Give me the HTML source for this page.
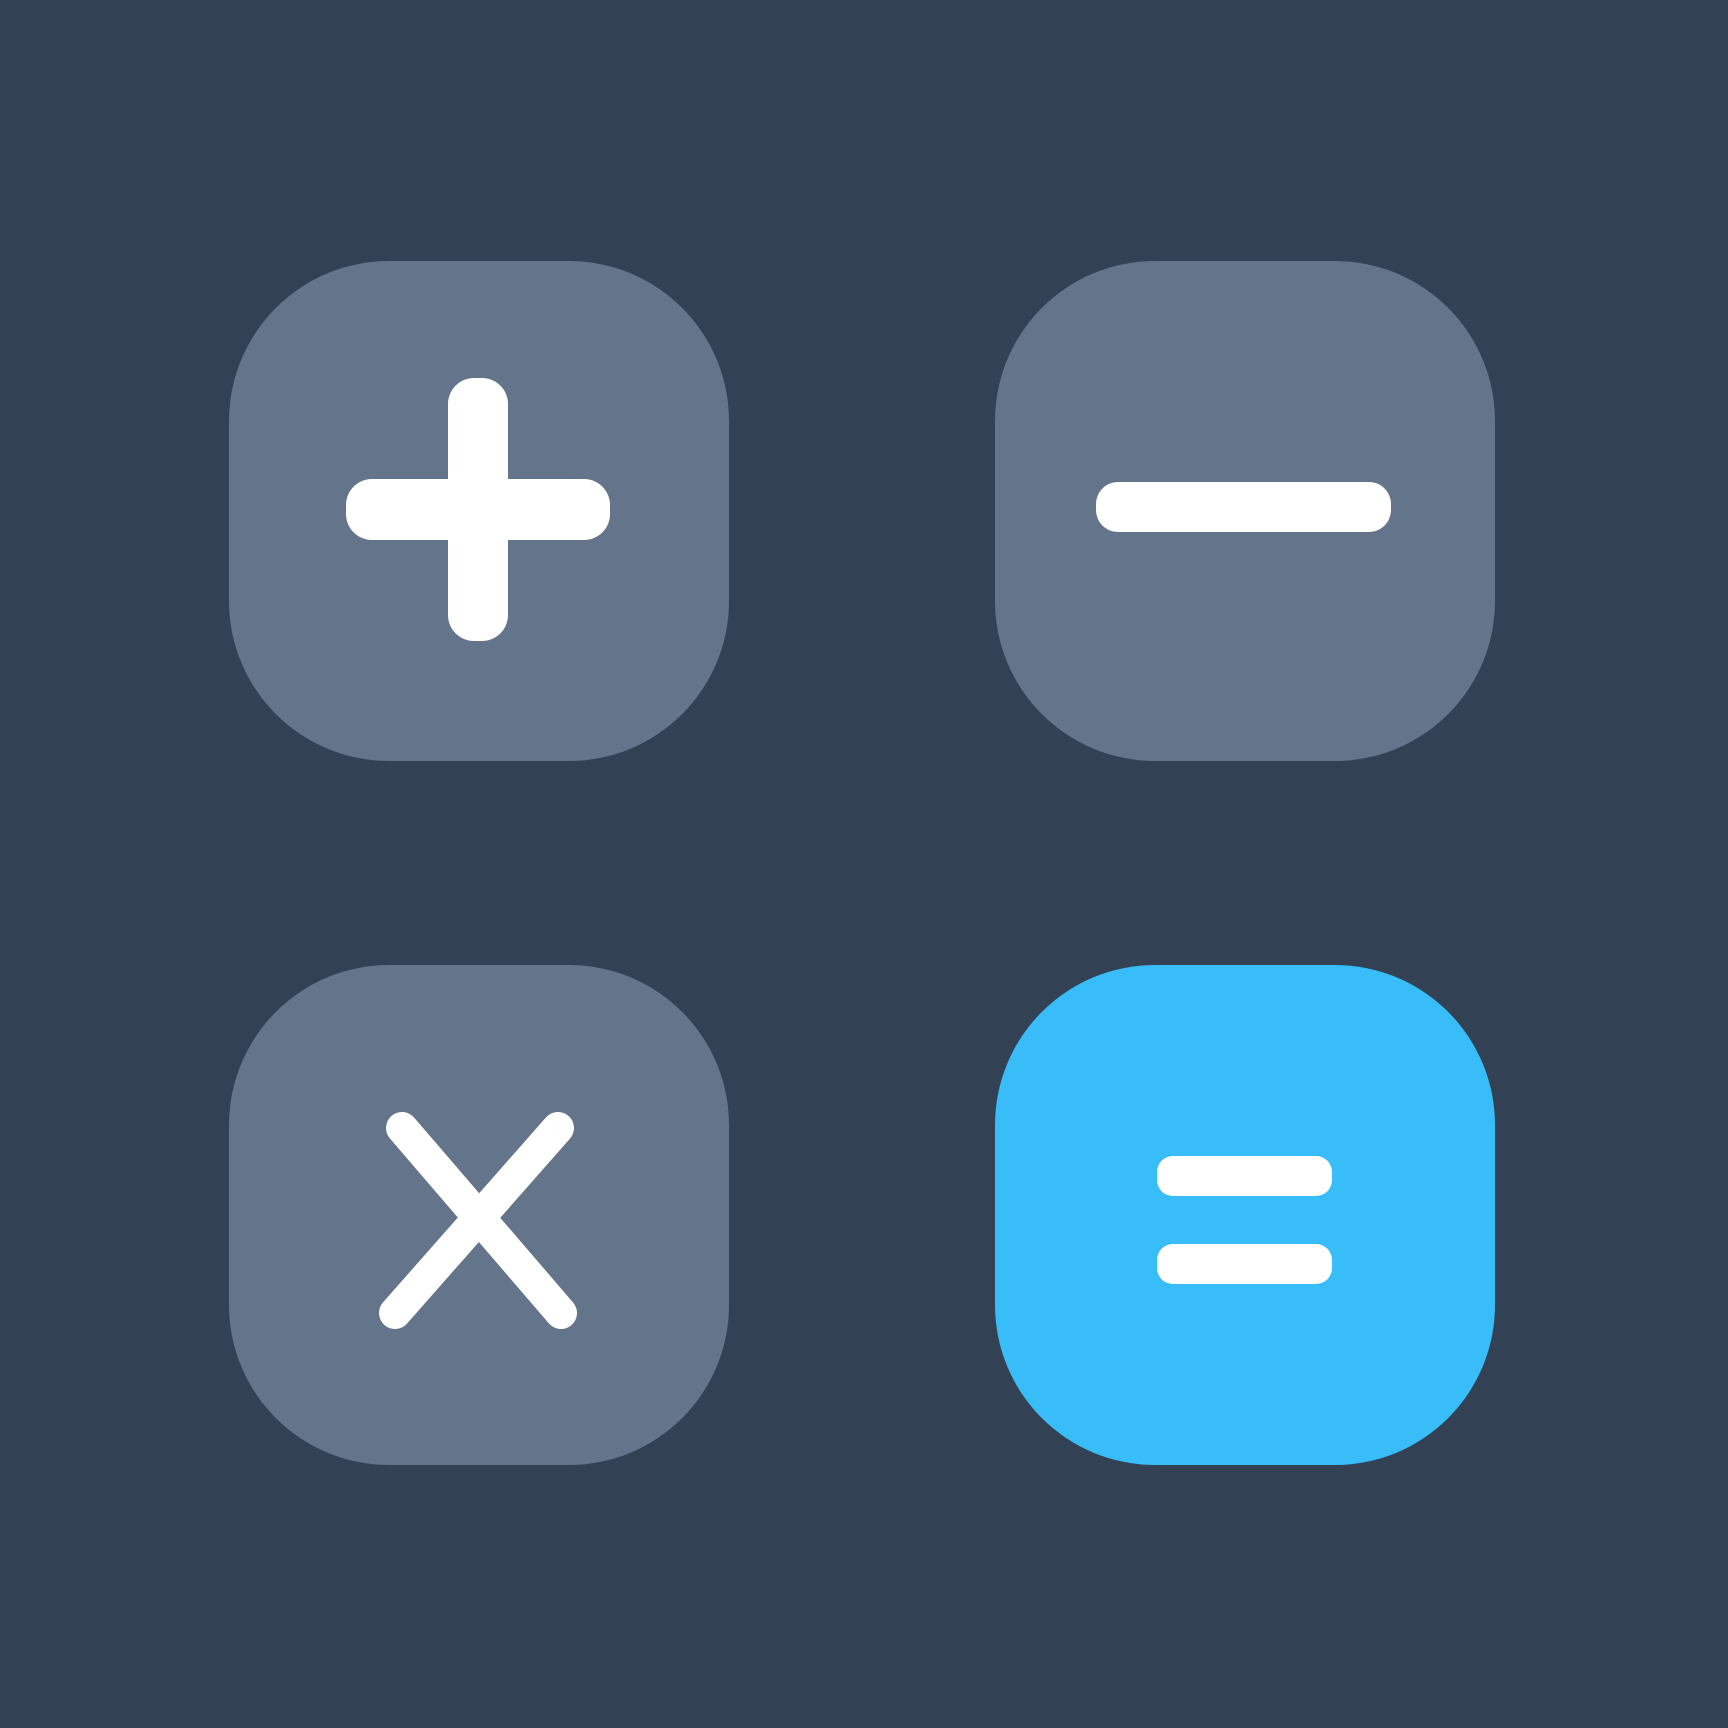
<!DOCTYPE html>
<html><head><meta charset="utf-8"><style>
html,body{margin:0;padding:0;background:#334155;width:1728px;height:1728px;overflow:hidden}
</style></head><body>
<svg width="1728" height="1728" viewBox="0 0 1728 1728" xmlns="http://www.w3.org/2000/svg">
<rect width="1728" height="1728" fill="#334155"/>
<rect x="229" y="261" width="500" height="500" rx="160" fill="#64748b"/>
<rect x="995" y="261" width="500" height="500" rx="160" fill="#64748b"/>
<rect x="229" y="965" width="500" height="500" rx="160" fill="#64748b"/>
<rect x="995" y="965" width="500" height="500" rx="160" fill="#38bdf8"/>
<g fill="#fff">
<rect x="448" y="378" width="60" height="263" rx="26"/>
<rect x="346" y="479" width="264" height="61" rx="26"/>
<rect x="1096" y="482" width="295" height="50" rx="22"/>
<rect x="1157" y="1156" width="175" height="40" rx="16"/>
<rect x="1157" y="1244" width="175" height="40" rx="16"/>
</g>
<g stroke="#fff" stroke-width="32" stroke-linecap="round">
<line x1="402" y1="1128" x2="561" y2="1313"/>
<line x1="558" y1="1128" x2="395" y2="1313"/>
</g>
</svg>
</body></html>
